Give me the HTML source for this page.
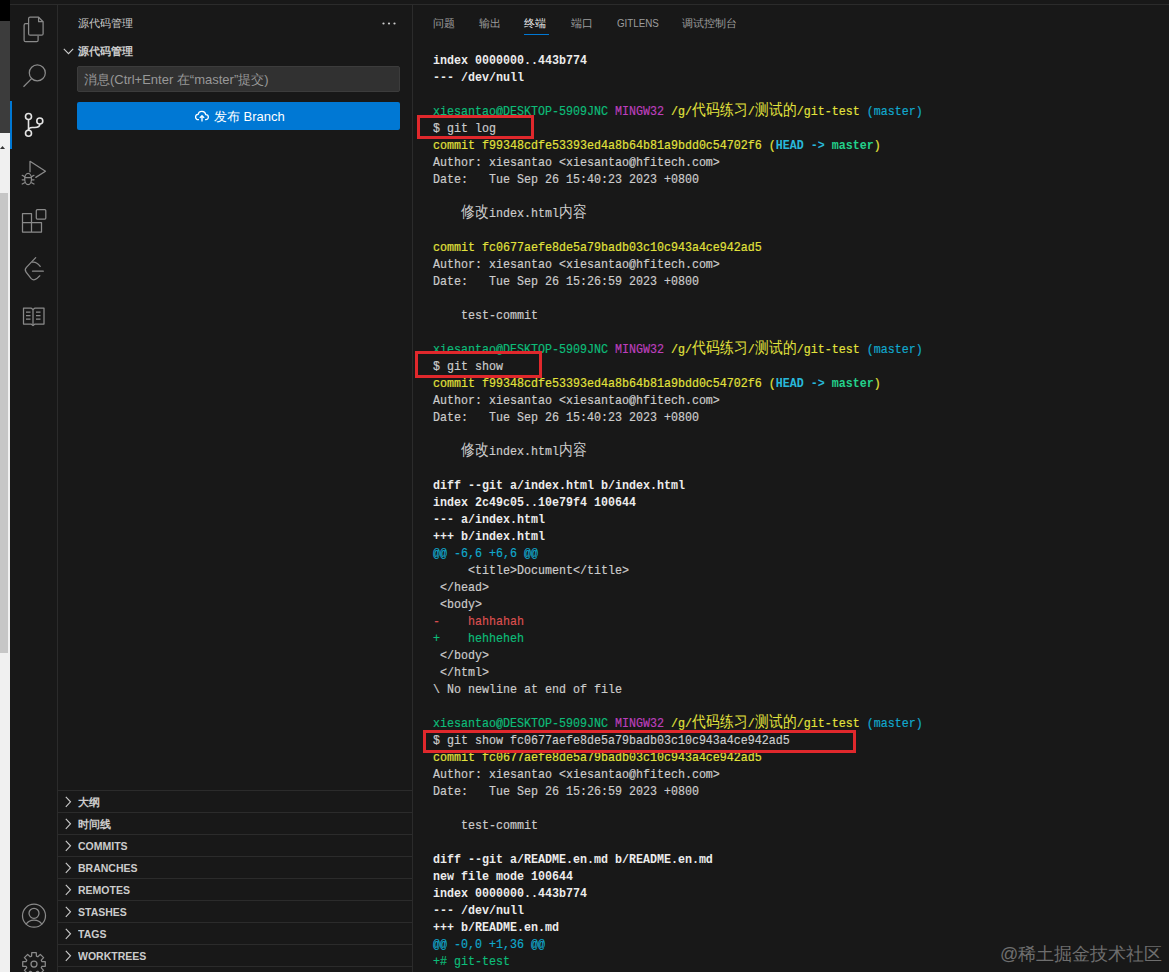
<!DOCTYPE html>
<html><head><meta charset="utf-8">
<style>
*{margin:0;padding:0;box-sizing:border-box}
html,body{width:1169px;height:972px;overflow:hidden;background:#181818}
body{position:relative;font-family:"Liberation Sans",sans-serif;color:#cccccc}
.abs{position:absolute}
/* left strip of other window */
#strip{left:0;top:0;width:10px;height:972px;background:#f0f0f0}
#act{left:10px;top:0;width:47px;height:972px;background:#181818}
#side{left:57px;top:5px;width:356px;height:967px;background:#181818;border-left:1px solid #2b2b2b;border-right:1px solid #2b2b2b}
#topline{left:10px;top:4px;width:1159px;height:1px;background:#2b2b2b}
.ttl{font-size:11px;color:#cccccc;white-space:nowrap}
.sec{left:58px;width:354px;height:22px;border-top:1px solid #2b2b2b}
.sec span{position:absolute;left:20px;top:5px;transform:scaleX(0.955);transform-origin:0 0;font-size:11px;font-weight:bold;color:#cccccc;white-space:nowrap}
.sec svg{position:absolute;left:6px;top:5px}
#term{left:413px;top:0;width:756px;height:972px}
.ln{position:absolute;left:433px;height:17px;line-height:17px;white-space:pre;font-family:"Liberation Mono",monospace;font-size:13.6px;color:#cccccc;transform:scaleX(0.8577);transform-origin:0 0;-webkit-text-stroke:0.2px currentColor}
.ln .w{display:inline-block;width:16.323px;font-style:normal;text-align:center;font-size:15.5px;font-weight:300;-webkit-text-stroke:0}
.bd{font-weight:bold;color:#ececec;-webkit-text-stroke:0}
.g{color:#0dbc79}.y{color:#e2e23c}.m{color:#bc3fbc}.c{color:#11a8cd}.r{color:#dc4f4f}
.cb{color:#29b8db;font-weight:bold;-webkit-text-stroke:0}.gb{color:#23d18b;font-weight:bold;-webkit-text-stroke:0}
.box{position:absolute;border:3px solid #e0282c}
.tab{position:absolute;top:16px;font-size:11px;color:#9d9d9d;white-space:nowrap}
</style></head><body>
<div id="strip" class="abs"></div>
<div class="abs" style="left:0;top:0;width:10px;height:21px;background:#000"></div>
<div class="abs" style="left:0;top:21px;width:10px;height:112px;background:#3c3c3c"></div>
<div class="abs" style="left:0;top:193px;width:8px;height:460px;background:#c6c6c6"></div>
<svg class="abs" style="left:0;top:144px" width="6" height="6" viewBox="0 0 6 6"><path d="M0 5 L2.5 2 L5 5Z" fill="#333"/></svg>
<div id="act" class="abs"></div>
<div id="topline" class="abs"></div>
<div id="side" class="abs"></div>
<!-- activity indicator -->
<div class="abs" style="left:10px;top:101px;width:2px;height:48px;background:#0078d4"></div>

<!-- activity icons -->
<svg class="abs" style="left:10px;top:0" width="47" height="340" viewBox="0 0 47 340" fill="none" stroke-linejoin="round">
 <!-- explorer -->
 <g stroke="#8a8a8a" stroke-width="1.25" transform="translate(0.6,0.7)">
  <path d="M19.5 16.5 h8.5 l4.5 4.5 v12 a1.5 1.5 0 0 1 -1.5 1.5 h-11.5 a1.5 1.5 0 0 1 -1.5 -1.5 v-15 a1.5 1.5 0 0 1 1.5 -1.5z"/>
  <path d="M28 16.5 v4.5 h4.5"/>
  <path d="M18 23 h-3 a1.5 1.5 0 0 0 -1.5 1.5 v15 a1.5 1.5 0 0 0 1.5 1.5 h11 a1.5 1.5 0 0 0 1.5 -1.5 v-4.5"/>
 </g>
 <!-- search -->
 <g stroke="#8a8a8a" stroke-width="1.25">
  <circle cx="27.3" cy="72.9" r="8"/>
  <path d="M21.6 78.6 L13.5 86.8"/>
 </g>
 <!-- scm -->
 <g stroke="#e4e4e4" stroke-width="1.6">
  <circle cx="18.5" cy="116.5" r="3"/>
  <circle cx="29.8" cy="121" r="3"/>
  <circle cx="18.5" cy="133.3" r="3"/>
  <path d="M18.5 119.5 V130.3"/>
  <path d="M29.8 124 c0 3 -2 3.5 -5 3.5 h-2.5 c-2.5 0 -3.8 1 -3.8 2.8"/>
 </g>
 <!-- run debug -->
 <g stroke="#8a8a8a" stroke-width="1.25" stroke-linejoin="round" stroke-linecap="round">
  <path d="M20 171.8 V161.3 L35.5 171.2 L25.8 177.4"/>
  <ellipse cx="18.1" cy="179" rx="3.4" ry="5.6"/>
  <path d="M14.9 177.6 h6.4"/>
  <path d="M12.2 175.3 l2.4 1.3 M12.2 179.8 h2.4 M12.2 184 l2.4 -1.3 M24 175.3 l-2.4 1.3 M24 179.8 h-2.4 M24 184 l-2.4 -1.3"/>
 </g>
 <!-- extensions -->
 <g stroke="#8a8a8a" stroke-width="1.25">
  <path d="M12.5 213.5 h9 v9 h10 v9.5 h-19 z"/>
  <path d="M12.5 222.5 h9 v9.5"/>
  <rect x="26.3" y="209.7" width="9.5" height="9.3" rx="1"/>
 </g>
 <!-- leetcode-like -->
 <g stroke="#8a8a8a" stroke-width="1.25" stroke-linecap="round" stroke-linejoin="round" fill="none">
  <path d="M25.7 257.6 L16.4 267.4 Q14.3 269.6 16.1 272 L21 278.4 Q23.6 281.3 26.8 278.6 L29.8 275.8"/>
  <path d="M22.6 262.2 Q26.5 261.6 30.2 266.4"/>
  <path d="M22.5 271.2 H33.3"/>
 </g>
 <!-- book -->
 <g stroke="#8a8a8a" stroke-width="1.25">
  <path d="M13.5 308 h7.5 l2 1.5 l2 -1.5 h9 v16 h-9 l-2 1.5 l-2 -1.5 h-7.5 z"/>
  <path d="M23 309.5 v16"/>
  <path d="M16 312 h4.5 M16 315.5 h4.5 M16 319 h4.5 M26 312 h4.5 M26 315.5 h4.5 M26 319 h4.5"/>
 </g>
</svg>
<svg class="abs" style="left:10px;top:890px" width="47" height="82" viewBox="0 0 47 82" fill="none">
 <g stroke="#8a8a8a" stroke-width="1.25">
  <circle cx="24" cy="25.7" r="11.5"/>
  <circle cx="24" cy="23.3" r="5"/>
  <path d="M16 34.5 a9 8 0 0 1 16 0"/>
  <path stroke-linejoin="round" d="M21.58 66.17 L21.72 62.73 L26.28 62.73 L26.42 66.17 L27.83 66.75 L30.35 64.41 L33.59 67.65 L31.25 70.17 L31.83 71.58 L35.27 71.72 L35.27 76.28 L31.83 76.42 L31.25 77.83 L33.59 80.35 L30.35 83.59 L27.83 81.25 L26.42 81.83 L26.28 85.27 L21.72 85.27 L21.58 81.83 L20.17 81.25 L17.65 83.59 L14.41 80.35 L16.75 77.83 L16.17 76.42 L12.73 76.28 L12.73 71.72 L16.17 71.58 L16.75 70.17 L14.41 67.65 L17.65 64.41 L20.17 66.75Z"/>
  <circle cx="24" cy="74" r="3"/>
 </g>
</svg>

<!-- sidebar header -->
<div class="abs ttl" style="left:78px;top:16px">源代码管理</div>
<div class="abs" style="left:382px;top:22px;width:14px;height:3px">
 <svg style="display:block" width="14" height="3" viewBox="0 0 14 3"><circle cx="1.5" cy="1.5" r="1.1" fill="#cccccc"/><circle cx="7" cy="1.5" r="1.1" fill="#cccccc"/><circle cx="12.5" cy="1.5" r="1.1" fill="#cccccc"/></svg>
</div>
<svg class="abs" style="left:63px;top:48px" width="11" height="7" viewBox="0 0 11 7" fill="none"><path d="M0.8 0.8 L5.5 5.6 L10.2 0.8" stroke="#cccccc" stroke-width="1.1"/></svg>
<div class="abs ttl" style="left:78px;top:44px;font-weight:bold">源代码管理</div>
<div class="abs" style="left:77px;top:66px;width:323px;height:26px;background:#313131;border-radius:2px;border:1px solid #3c3c3c"></div>
<div class="abs" style="left:84px;top:71px;font-size:13px;color:#989898;white-space:nowrap">消息(Ctrl+Enter 在“master”提交)</div>
<div class="abs" style="left:77px;top:102px;width:323px;height:28px;background:#0078d4;border-radius:2px"></div>
<svg class="abs" style="left:195px;top:110px" width="14" height="12.25" viewBox="0 0 16 14" fill="none" stroke="#ffffff" stroke-width="1.5">
 <path d="M4.5 11 H3.8 a3 3 0 0 1 -0.3 -6 a4.5 4.5 0 0 1 8.8 0.3 a2.8 2.8 0 0 1 0.2 5.7 H11.5"/>
 <path d="M8 13 V6.5 M5.5 9 L8 6.5 L10.5 9"/>
</svg>
<div class="abs" style="left:214px;top:108px;font-size:13px;color:#ffffff;white-space:nowrap">发布 Branch</div>

<!-- sections -->
<div class="abs sec" style="top:790px"><svg width="8" height="12" viewBox="0 0 8 12" fill="none"><path d="M1.8 0.8 L6.5 5.8 L1.8 10.8" stroke="#cccccc" stroke-width="1.1"/></svg><span style="transform:none;top:4px">大纲</span></div>
<div class="abs sec" style="top:812px"><svg width="8" height="12" viewBox="0 0 8 12" fill="none"><path d="M1.8 0.8 L6.5 5.8 L1.8 10.8" stroke="#cccccc" stroke-width="1.1"/></svg><span style="transform:none;top:4px">时间线</span></div>
<div class="abs sec" style="top:834px"><svg width="8" height="12" viewBox="0 0 8 12" fill="none"><path d="M1.8 0.8 L6.5 5.8 L1.8 10.8" stroke="#cccccc" stroke-width="1.1"/></svg><span>COMMITS</span></div>
<div class="abs sec" style="top:856px"><svg width="8" height="12" viewBox="0 0 8 12" fill="none"><path d="M1.8 0.8 L6.5 5.8 L1.8 10.8" stroke="#cccccc" stroke-width="1.1"/></svg><span>BRANCHES</span></div>
<div class="abs sec" style="top:878px"><svg width="8" height="12" viewBox="0 0 8 12" fill="none"><path d="M1.8 0.8 L6.5 5.8 L1.8 10.8" stroke="#cccccc" stroke-width="1.1"/></svg><span>REMOTES</span></div>
<div class="abs sec" style="top:900px"><svg width="8" height="12" viewBox="0 0 8 12" fill="none"><path d="M1.8 0.8 L6.5 5.8 L1.8 10.8" stroke="#cccccc" stroke-width="1.1"/></svg><span>STASHES</span></div>
<div class="abs sec" style="top:922px"><svg width="8" height="12" viewBox="0 0 8 12" fill="none"><path d="M1.8 0.8 L6.5 5.8 L1.8 10.8" stroke="#cccccc" stroke-width="1.1"/></svg><span>TAGS</span></div>
<div class="abs sec" style="top:944px"><svg width="8" height="12" viewBox="0 0 8 12" fill="none"><path d="M1.8 0.8 L6.5 5.8 L1.8 10.8" stroke="#cccccc" stroke-width="1.1"/></svg><span>WORKTREES</span></div>
<div class="abs sec" style="top:966px;height:6px"></div>

<!-- panel tabs -->
<div class="tab" style="left:433px">问题</div>
<div class="tab" style="left:479px">输出</div>
<div class="tab" style="left:524px;color:#e7e7e7">终端</div>
<div class="abs" style="left:524px;top:34px;width:25px;height:1px;background:#0078d4"></div>
<div class="tab" style="left:571px">端口</div>
<div class="tab" style="left:617px;top:17px;font-size:11px;transform:scaleX(0.89);transform-origin:0 0">GITLENS</div>
<div class="tab" style="left:682px">调试控制台</div>

<!-- terminal -->
<div class="ln" style="top:52px"><span class="bd">index 0000000..443b774</span></div>
<div class="ln" style="top:69px"><span class="bd">--- /dev/null</span></div>
<div class="ln" style="top:86px"></div>
<div class="ln" style="top:103px"><span class="g">xiesantao@DESKTOP-5909JNC </span><span class="m">MINGW32 </span><span class="y">/g/<i class="w">代</i><i class="w">码</i><i class="w">练</i><i class="w">习</i>/<i class="w">测</i><i class="w">试</i><i class="w">的</i>/git-test</span> <span class="c">(master)</span></div>
<div class="ln" style="top:120px">$ git log</div>
<div class="ln" style="top:137px"><span class="y">commit f99348cdfe53393ed4a8b64b81a9bdd0c54702f6 (</span><span class="cb">HEAD -&gt; </span><span class="gb">master</span><span class="y">)</span></div>
<div class="ln" style="top:154px">Author: xiesantao &lt;xiesantao@hfitech.com&gt;</div>
<div class="ln" style="top:171px">Date:   Tue Sep 26 15:40:23 2023 +0800</div>
<div class="ln" style="top:188px"></div>
<div class="ln" style="top:205px">    <i class="w">修</i><i class="w">改</i>index.html<i class="w">内</i><i class="w">容</i></div>
<div class="ln" style="top:222px"></div>
<div class="ln" style="top:239px"><span class="y">commit fc0677aefe8de5a79badb03c10c943a4ce942ad5</span></div>
<div class="ln" style="top:256px">Author: xiesantao &lt;xiesantao@hfitech.com&gt;</div>
<div class="ln" style="top:273px">Date:   Tue Sep 26 15:26:59 2023 +0800</div>
<div class="ln" style="top:290px"></div>
<div class="ln" style="top:307px">    test-commit</div>
<div class="ln" style="top:324px"></div>
<div class="ln" style="top:341px"><span class="g">xiesantao@DESKTOP-5909JNC </span><span class="m">MINGW32 </span><span class="y">/g/<i class="w">代</i><i class="w">码</i><i class="w">练</i><i class="w">习</i>/<i class="w">测</i><i class="w">试</i><i class="w">的</i>/git-test</span> <span class="c">(master)</span></div>
<div class="ln" style="top:358px">$ git show</div>
<div class="ln" style="top:375px"><span class="y">commit f99348cdfe53393ed4a8b64b81a9bdd0c54702f6 (</span><span class="cb">HEAD -&gt; </span><span class="gb">master</span><span class="y">)</span></div>
<div class="ln" style="top:392px">Author: xiesantao &lt;xiesantao@hfitech.com&gt;</div>
<div class="ln" style="top:409px">Date:   Tue Sep 26 15:40:23 2023 +0800</div>
<div class="ln" style="top:426px"></div>
<div class="ln" style="top:443px">    <i class="w">修</i><i class="w">改</i>index.html<i class="w">内</i><i class="w">容</i></div>
<div class="ln" style="top:460px"></div>
<div class="ln" style="top:477px"><span class="bd">diff --git a/index.html b/index.html</span></div>
<div class="ln" style="top:494px"><span class="bd">index 2c49c05..10e79f4 100644</span></div>
<div class="ln" style="top:511px"><span class="bd">--- a/index.html</span></div>
<div class="ln" style="top:528px"><span class="bd">+++ b/index.html</span></div>
<div class="ln" style="top:545px"><span class="c">@@ -6,6 +6,6 @@</span></div>
<div class="ln" style="top:562px">     &lt;title&gt;Document&lt;/title&gt;</div>
<div class="ln" style="top:579px"> &lt;/head&gt;</div>
<div class="ln" style="top:596px"> &lt;body&gt;</div>
<div class="ln" style="top:613px"><span class="r">-    hahhahah</span></div>
<div class="ln" style="top:630px"><span class="g">+    hehheheh</span></div>
<div class="ln" style="top:647px"> &lt;/body&gt;</div>
<div class="ln" style="top:664px"> &lt;/html&gt;</div>
<div class="ln" style="top:681px">\ No newline at end of file</div>
<div class="ln" style="top:698px"></div>
<div class="ln" style="top:715px"><span class="g">xiesantao@DESKTOP-5909JNC </span><span class="m">MINGW32 </span><span class="y">/g/<i class="w">代</i><i class="w">码</i><i class="w">练</i><i class="w">习</i>/<i class="w">测</i><i class="w">试</i><i class="w">的</i>/git-test</span> <span class="c">(master)</span></div>
<div class="ln" style="top:732px">$ git show fc0677aefe8de5a79badb03c10c943a4ce942ad5</div>
<div class="ln" style="top:749px"><span class="y">commit fc0677aefe8de5a79badb03c10c943a4ce942ad5</span></div>
<div class="ln" style="top:766px">Author: xiesantao &lt;xiesantao@hfitech.com&gt;</div>
<div class="ln" style="top:783px">Date:   Tue Sep 26 15:26:59 2023 +0800</div>
<div class="ln" style="top:800px"></div>
<div class="ln" style="top:817px">    test-commit</div>
<div class="ln" style="top:834px"></div>
<div class="ln" style="top:851px"><span class="bd">diff --git a/README.en.md b/README.en.md</span></div>
<div class="ln" style="top:868px"><span class="bd">new file mode 100644</span></div>
<div class="ln" style="top:885px"><span class="bd">index 0000000..443b774</span></div>
<div class="ln" style="top:902px"><span class="bd">--- /dev/null</span></div>
<div class="ln" style="top:919px"><span class="bd">+++ b/README.en.md</span></div>
<div class="ln" style="top:936px"><span class="c">@@ -0,0 +1,36 @@</span></div>
<div class="ln" style="top:953px"><span class="g">+# git-test</span></div>

<div class="box" style="left:417px;top:115px;width:117px;height:24px"></div>
<div class="box" style="left:415px;top:351px;width:127px;height:27px"></div>
<div class="box" style="left:423px;top:730px;width:433px;height:23px"></div>

<div class="abs" style="left:1000px;top:942px;font-size:18px;color:#6e6e6e;white-space:nowrap">@稀土掘金技术社区</div>
</body></html>
